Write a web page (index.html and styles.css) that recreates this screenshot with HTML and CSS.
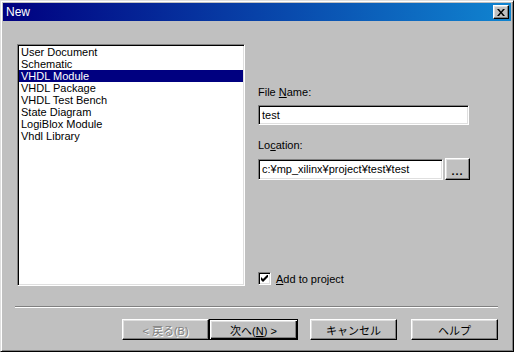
FILE: index.html
```html
<!DOCTYPE html>
<html lang="ja">

<head>
    <meta charset="UTF-8">
    <title>New</title>
    <link rel="stylesheet" href="styles.css">
</head>

<body>
    <div class="window">
        <!-- Title bar -->
        <div class="titlebar">
            <span class="title">New</span>
            <button class="close-btn" aria-label="Close">
                <svg width="8" height="7" viewBox="0 0 8 7">
                    <path d="M0 0h2l2 2.5L6 0h2L5 3.5 8 7H6L4 4.5 2 7H0l3-3.5z" fill="#000"/>
                </svg>
            </button>
        </div>

        <div class="content">
            <div class="main">
                <!-- Template list -->
                <ul class="listbox">
                    <li>User Document</li>
                    <li>Schematic</li>
                    <li class="selected">VHDL Module</li>
                    <li>VHDL Package</li>
                    <li>VHDL Test Bench</li>
                    <li>State Diagram</li>
                    <li>LogiBlox Module</li>
                    <li>Vhdl Library</li>
                </ul>

                <!-- File options -->
                <div class="options">
                    <label class="field-label first">File <u>N</u>ame:</label>
                    <div class="textbox name-box">test</div>

                    <label class="field-label second">Lo<u>c</u>ation:</label>
                    <div class="location-row">
                        <div class="textbox location-box">c:¥mp_xilinx¥project¥test¥test</div>
                        <button class="btn browse-btn">...</button>
                    </div>

                    <div class="check-row">
                        <span class="checkbox">
                            <svg width="7" height="7" viewBox="0 0 7 7">
                                <path d="M0 2v3l2 2 5-5V-1L2 4z" fill="#000"/>
                            </svg>
                        </span>
                        <span><u>A</u>dd to project</span>
                    </div>
                </div>
            </div>

            <div class="separator"></div>

            <!-- Wizard buttons -->
            <div class="buttons">
                <div class="nav-group">
                    <button class="btn disabled">&lt; 戻る(B)</button>
                    <button class="btn default">次へ(<u>N</u>) &gt;</button>
                </div>
                <button class="btn">キャンセル</button>
                <button class="btn">ヘルプ</button>
            </div>
        </div>
    </div>
</body>

</html>
```

FILE: styles.css
```css
/* Win9x style dialog */

body {
    margin: 0;
    padding: 0;
    background-color: #c0c0c0;
    font-family: "Liberation Sans", Arial, "Noto Sans CJK JP", sans-serif;
    font-size: 11px;
    color: #000;
}

.window {
    width: 514px;
    height: 352px;
    box-sizing: border-box;
    background-color: #c0c0c0;
    border: 1px solid;
    border-color: #dfdfdf #000 #000 #dfdfdf;
    box-shadow: inset 1px 1px #fff, inset -1px -1px #808080;
    padding: 2px;
    display: flex;
    flex-direction: column;
}

.titlebar {
    height: 18px;
    background: linear-gradient(to right, #000080, #1084d0);
    display: flex;
    align-items: center;
    justify-content: space-between;
    padding: 0 2px 0 3px;
}

.title {
    color: #fff;
    font-size: 12px;
    line-height: 18px;
}

.close-btn {
    width: 16px;
    height: 14px;
    padding: 0;
    margin: 0;
    background-color: #c0c0c0;
    border: 1px solid;
    border-color: #fff #000 #000 #fff;
    box-shadow: inset -1px -1px #808080, inset 1px 1px #dfdfdf;
    display: flex;
    align-items: center;
    justify-content: center;
}

.close-btn svg {
    display: block;
}

.content {
    flex: 1;
    padding: 23px 13px 0 12px;
    display: flex;
    flex-direction: column;
}

.main {
    display: flex;
    padding-left: 2px;
    gap: 13px;
}

.listbox {
    width: 228px;
    height: 242px;
    box-sizing: border-box;
    margin: 0;
    padding: 1px;
    list-style: none;
    background-color: #fff;
    border: 1px solid;
    border-color: #808080 #fff #fff #808080;
    box-shadow: inset 1px 1px #000, inset -1px -1px #dfdfdf;
}

.listbox li {
    height: 12px;
    line-height: 12px;
    padding-left: 2px;
    white-space: nowrap;
}

.listbox li.selected {
    background-color: #000080;
    color: #fff;
}

.options {
    display: flex;
    flex-direction: column;
    width: 212px;
}

.field-label {
    display: block;
    line-height: 13px;
}

.field-label.first {
    margin-top: 42px;
}

.field-label.second {
    margin-top: 14px;
}

.textbox {
    box-sizing: border-box;
    background-color: #fff;
    border: 1px solid;
    border-color: #808080 #fff #fff #808080;
    box-shadow: inset 1px 1px #000, inset -1px -1px #dfdfdf;
    padding: 0 3px;
    white-space: nowrap;
    overflow: hidden;
}

.name-box {
    width: 211px;
    height: 20px;
    line-height: 18px;
    margin-top: 6px;
}

.location-row {
    display: flex;
    align-items: flex-start;
    gap: 2px;
    margin-top: 6px;
}

.location-box {
    width: 185px;
    height: 21px;
    line-height: 19px;
    margin-top: 1px;
}

.btn {
    box-sizing: border-box;
    height: 21px;
    padding: 0;
    margin: 0;
    background-color: #c0c0c0;
    border: 1px solid;
    border-color: #fff #000 #000 #fff;
    box-shadow: inset -1px -1px #808080, inset 1px 1px #dfdfdf;
    font-family: "Liberation Sans", Arial, "Noto Sans CJK JP", sans-serif;
    font-size: 11px;
    color: #000;
    width: 87px;
}

.browse-btn {
    width: 25px;
    height: 22px;
    font-weight: bold;
    letter-spacing: 1px;
    padding-top: 3px;
}

.check-row {
    display: flex;
    align-items: center;
    gap: 5px;
    margin-top: auto;
    margin-bottom: 1px;
}

.checkbox {
    width: 13px;
    height: 13px;
    box-sizing: border-box;
    background-color: #fff;
    border: 1px solid;
    border-color: #808080 #fff #fff #808080;
    box-shadow: inset 1px 1px #000, inset -1px -1px #dfdfdf;
    display: flex;
    align-items: center;
    justify-content: center;
}

.checkbox svg {
    display: block;
}

.separator {
    height: 0;
    margin-top: 20px;
    border-top: 1px solid #808080;
    border-bottom: 1px solid #fff;
}

.buttons {
    display: flex;
    justify-content: flex-end;
    margin-top: 11px;
}

.nav-group {
    display: flex;
    margin-right: 12px;
}

.buttons > .btn + .btn {
    margin-left: 14px;
}

.btn.disabled {
    color: #808080;
    text-shadow: 1px 1px #fff;
}

.btn.default {
    width: 89px;
    border: 1px solid #000;
    box-shadow: inset 1px 1px #fff, inset -1px -1px #000, inset -2px -2px #808080, inset 2px 2px #dfdfdf;
}
```
